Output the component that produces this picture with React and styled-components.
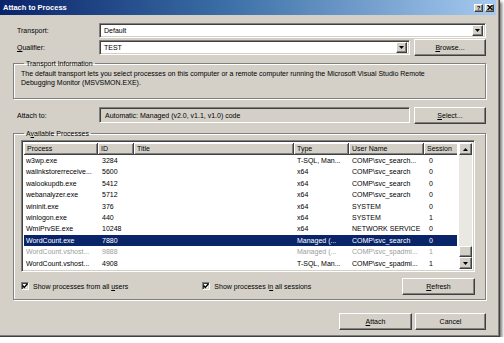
import styled, { createGlobalStyle } from "styled-components";

const GlobalStyle = createGlobalStyle`
  * { box-sizing: border-box; }
  html, body { margin: 0; padding: 0; background: #fff; }
  body {
    font-family: "Liberation Sans", Arial, sans-serif;
    font-size: 7px;
    color: #000;
  }
`;

const processes = [
  { name: "w3wp.exe", id: "3284", type: "T-SQL, Man...", user: "COMP\\svc_search...", session: "0" },
  { name: "walinkstorerreceive...", id: "5600", type: "x64", user: "COMP\\svc_search", session: "0" },
  { name: "walookupdb.exe", id: "5412", type: "x64", user: "COMP\\svc_search", session: "0" },
  { name: "webanalyzer.exe", id: "5712", type: "x64", user: "COMP\\svc_search", session: "0" },
  { name: "wininit.exe", id: "376", type: "x64", user: "SYSTEM", session: "0" },
  { name: "winlogon.exe", id: "440", type: "x64", user: "SYSTEM", session: "1" },
  { name: "WmiPrvSE.exe", id: "10248", type: "x64", user: "NETWORK SERVICE", session: "0" },
  { name: "WordCount.exe", id: "7880", type: "Managed (...", user: "COMP\\svc_search", session: "0", selected: true },
  { name: "WordCount.vshost...", id: "9888", type: "Managed (...", user: "COMP\\svc_spadmi...", session: "1", disabled: true },
  { name: "WordCount.vshost...", id: "4908", type: "T-SQL, Man...", user: "COMP\\svc_spadmi...", session: "1" },
  { name: "WORDCOUNT.EXE", id: "1412", type: "Managed (...", user: "SYSTEM", session: "1" },
];

const columns = "74px 36px 160px 55px 75px 35px 1fr";

const App = () => {
  return (
    <>
      <GlobalStyle />
      <Dialog>
        <TitleBar>
          <span>Attach to Process</span>
          <CaptionButtons>
            <CaptionButton>?</CaptionButton>
            <CaptionButton>
              <svg width="6" height="5" viewBox="0 0 6 5">
                <path d="M0.5 0 L5.5 5 M5.5 0 L0.5 5" stroke="#000" strokeWidth="1.3" />
              </svg>
            </CaptionButton>
          </CaptionButtons>
        </TitleBar>

        <Content>
          <FieldRow $top={8} $height={15}>
            <Label>Transport:</Label>
            <Combo>
              <ComboText>Default</ComboText>
              <DropButton><DownArrow /></DropButton>
            </Combo>
          </FieldRow>

          <FieldRow $top={1} $height={17}>
            <Label><u>Q</u>ualifier:</Label>
            <Combo>
              <ComboText>TEST</ComboText>
              <DropButton><DownArrow /></DropButton>
            </Combo>
            <Button><u>B</u>rowse...</Button>
          </FieldRow>

          <Group $top={3} $height={40}>
            <Legend>Transport Information</Legend>
            <Description>
              The default transport lets you select processes on this computer or a remote computer running the Microsoft Visual Studio Remote
              <br />
              Debugging Monitor (MSVSMON.EXE).
            </Description>
          </Group>

          <FieldRow $top={8} $height={16}>
            <Label>Attach to:</Label>
            <ReadOnlyField>Automatic: Managed (v2.0, v1.1, v1.0) code</ReadOnlyField>
            <Button><u>S</u>elect...</Button>
          </FieldRow>

          <Group $top={6} $height={171}>
            <Legend>A<u>v</u>ailable Processes</Legend>
            <ListBox>
              <ListMain>
                <HeaderRow>
                  <HeaderCell>Process</HeaderCell>
                  <HeaderCell>ID</HeaderCell>
                  <HeaderCell>Title</HeaderCell>
                  <HeaderCell>Type</HeaderCell>
                  <HeaderCell>User Name</HeaderCell>
                  <HeaderCell>Session</HeaderCell>
                  <HeaderFiller />
                </HeaderRow>
                {processes.map((p, i) => (
                  <Row key={i} $selected={p.selected} $disabled={p.disabled}>
                    <Cell $pad={2}>{p.name}</Cell>
                    <Cell $pad={4}>{p.id}</Cell>
                    <Cell $pad={4}></Cell>
                    <Cell $pad={3}>{p.type}</Cell>
                    <Cell $pad={3}>{p.user}</Cell>
                    <Cell $pad={5}>{p.session}</Cell>
                  </Row>
                ))}
              </ListMain>
              <ScrollBar>
                <ScrollButton><UpArrow /></ScrollButton>
                <Track>
                  <Thumb />
                </Track>
                <ScrollButton><DownArrow /></ScrollButton>
              </ScrollBar>
            </ListBox>

            <OptionsRow>
              <CheckOption>
                <CheckBox><CheckMark /></CheckBox>
                <span>Show processes from all <u>u</u>sers</span>
              </CheckOption>
              <CheckOption $left={74}>
                <CheckBox><CheckMark /></CheckBox>
                <span>Show processes i<u>n</u> all sessions</span>
              </CheckOption>
              <Button $width={73} $push><u>R</u>efresh</Button>
            </OptionsRow>
          </Group>

          <Footer>
            <Button $width={73}><u>A</u>ttach</Button>
            <Button $width={71}>Cancel</Button>
          </Footer>
        </Content>
      </Dialog>
    </>
  );
};

const DownArrow = () => (
  <svg width="5" height="3" viewBox="0 0 5 3">
    <path d="M0 0 H5 L2.5 3 Z" fill="#000" />
  </svg>
);

const UpArrow = () => (
  <svg width="5" height="3" viewBox="0 0 5 3">
    <path d="M0 3 H5 L2.5 0 Z" fill="#000" />
  </svg>
);

const CheckMark = () => (
  <svg width="6" height="6" viewBox="0 0 6 6">
    <path d="M0.5 2.5 L2.3 4.5 L5.5 0.8" stroke="#000" strokeWidth="1.4" fill="none" />
  </svg>
);

export default App;

const raised = `
  background: #d4d0c8;
  border: 1px solid;
  border-color: #fff #404040 #404040 #fff;
  box-shadow: inset -1px -1px 0 #808080;
`;

const sunken = `
  border: 1px solid;
  border-color: #808080 #fff #fff #808080;
  box-shadow: inset 1px 1px 0 #404040, inset -1px -1px 0 #d4d0c8;
`;

const Dialog = styled.div`
  width: 500px;
  height: 337px;
  background: #d4d0c8;
  padding: 0 3px 0 0;
  border-right: 1px solid #404040;
  border-bottom: 1px solid #404040;
  box-shadow: inset -1px -1px 0 #808080, 2px 2px 3px rgba(0, 0, 0, 0.55);
  display: flex;
  flex-direction: column;
`;

const TitleBar = styled.div`
  height: 15px;
  display: flex;
  align-items: center;
  justify-content: space-between;
  padding: 0 2px 0 3px;
  background: linear-gradient(to right, #0a246a, #3a6ea5 45%, #a6caf0);
  color: #fff;
  font-weight: bold;
  font-size: 7.5px;
`;

const CaptionButtons = styled.div`
  display: flex;
  gap: 2px;
`;

const CaptionButton = styled.div`
  ${raised}
  width: 9px;
  height: 8px;
  display: flex;
  align-items: center;
  justify-content: center;
  color: #000;
  font-size: 6px;
  font-weight: bold;
  line-height: 1;
`;

const Content = styled.div`
  display: flex;
  flex-direction: column;
  padding: 0 10px 0 13px;
`;

const FieldRow = styled.div`
  display: flex;
  align-items: center;
  gap: 4px;
  margin-top: ${(p) => p.$top}px;
  height: ${(p) => p.$height}px;
`;

const Label = styled.div`
  width: 82px;
  padding-left: 4px;
`;

const Combo = styled.div`
  ${sunken}
  flex: 1;
  height: 15px;
  background: #fff;
  display: flex;
  align-items: center;
  padding: 2px;
`;

const ComboText = styled.div`
  flex: 1;
  padding-left: 2px;
`;

const DropButton = styled.div`
  ${raised}
  width: 11px;
  height: 11px;
  display: flex;
  align-items: center;
  justify-content: center;
`;

const Button = styled.div`
  ${raised}
  width: ${(p) => p.$width || 72}px;
  height: 17px;
  display: flex;
  align-items: center;
  justify-content: center;
  flex-shrink: 0;
  margin-left: ${(p) => (p.$push ? "auto" : "0")};
`;

const ReadOnlyField = styled.div`
  ${sunken}
  flex: 1;
  height: 16px;
  display: flex;
  align-items: center;
  padding-left: 5px;
  background: #d4d0c8;
`;

const Group = styled.fieldset`
  margin: ${(p) => p.$top}px 0 0 0;
  padding: 0 10px 0 7px;
  height: ${(p) => p.$height}px;
  border: 1px solid #808080;
  box-shadow: inset 1px 1px 0 #fff, 1px 1px 0 #fff;
  min-width: 0;
`;

const Legend = styled.legend`
  padding: 0 2px;
  margin-left: 3px;
  line-height: 9px;
`;

const Description = styled.div`
  margin-top: 1px;
  line-height: 9px;
  white-space: nowrap;
`;

const ListBox = styled.div`
  ${sunken}
  margin-top: 2px;
  height: 132px;
  background: #fff;
  display: flex;
  padding: 2px;
`;

const ListMain = styled.div`
  flex: 1;
  overflow: hidden;
  display: flex;
  flex-direction: column;
`;

const HeaderRow = styled.div`
  display: grid;
  grid-template-columns: ${columns};
  height: 12px;
  flex-shrink: 0;
`;

const HeaderCell = styled.div`
  background: #d4d0c8;
  border-right: 1px solid #404040;
  border-bottom: 1px solid #404040;
  box-shadow: inset 1px 1px 0 #fff, inset -1px -1px 0 #808080;
  padding-left: 3px;
  display: flex;
  align-items: center;
`;

const HeaderFiller = styled.div`
  background: #fff;
`;

const Row = styled.div`
  display: grid;
  grid-template-columns: ${columns};
  height: 11.4px;
  line-height: 11.4px;
  flex-shrink: 0;
  background: ${(p) => (p.$selected ? "#0a246a" : "transparent")};
  color: ${(p) => (p.$selected ? "#fff" : p.$disabled ? "#9c9c9c" : "#000")};
`;

const Cell = styled.div`
  padding-left: ${(p) => p.$pad}px;
  white-space: nowrap;
  overflow: hidden;
  height: 11.4px;
`;

const ScrollBar = styled.div`
  width: 13px;
  margin-left: 2px;
  display: flex;
  flex-direction: column;
`;

const ScrollButton = styled.div`
  ${raised}
  height: 12px;
  display: flex;
  align-items: center;
  justify-content: center;
  flex-shrink: 0;
`;

const Track = styled.div`
  flex: 1;
  background: #eae8e3;
  display: flex;
  flex-direction: column;
  justify-content: flex-end;
`;

const Thumb = styled.div`
  ${raised}
  height: 11px;
`;

const OptionsRow = styled.div`
  display: flex;
  align-items: center;
  margin-top: 6px;
  height: 16px;
`;

const CheckOption = styled.div`
  display: flex;
  align-items: center;
  gap: 4px;
  margin-left: ${(p) => p.$left || 0}px;
  white-space: nowrap;
`;

const CheckBox = styled.div`
  ${sunken}
  width: 8px;
  height: 8px;
  background: #fff;
  display: flex;
  align-items: center;
  justify-content: center;
`;

const Footer = styled.div`
  display: flex;
  justify-content: flex-end;
  gap: 3px;
  margin-top: 13px;
`;
